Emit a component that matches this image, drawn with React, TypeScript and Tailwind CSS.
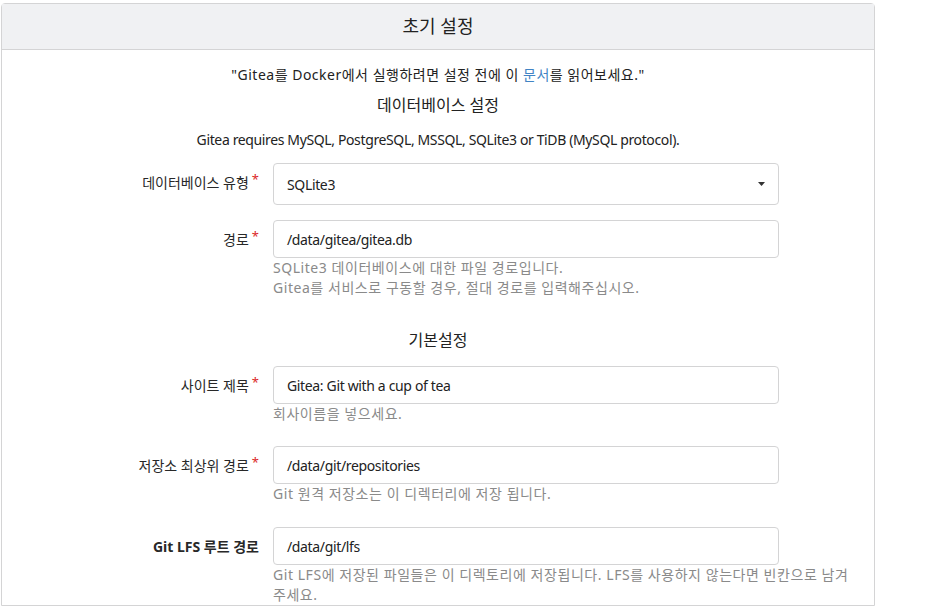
const font = { fontFamily: '"Noto Sans", "Noto Sans CJK KR", sans-serif' };

function Req() {
  return <span className="ml-[3px] relative top-[-4px] text-[#db2828] text-[13px]">*</span>;
}

function Row({
  label,
  required,
  bold,
  children,
  help,
}: {
  label: string;
  required?: boolean;
  bold?: boolean;
  children: React.ReactNode;
  help?: React.ReactNode;
}) {
  return (
    <div className="flex items-start">
      <div
        className={`w-[258px] shrink-0 text-right pt-[9px] pr-[1px] text-[14px] text-[#282828] ${bold ? "font-bold" : ""}`}
      >
        {label}
        {required && <Req />}
      </div>
      <div className="ml-[13px] flex-1 pr-[16px]">
        {children}
        {help && <div className="text-[14px] leading-[20px] tracking-[0.55px] text-[#8a8a8a]">{help}</div>}
      </div>
    </div>
  );
}

function TextInput({ value }: { value: string }) {
  return (
    <div className="w-[506px] h-[38px] border border-[#d4d4d5] rounded-[4px] flex items-center px-[13px] text-[14px] tracking-[-0.35px] text-[#222]">
      {value}
    </div>
  );
}

export default function App() {
  return (
    <div className="bg-white h-[606px] overflow-hidden" style={font}>
      <div className="mt-[3px] ml-px w-[874px] border border-[#d4d4d5] rounded-t-[4px]">
        <div className="h-[46px] bg-[#f0f1f3] border-b border-[#d4d4d5] flex items-center justify-center text-[18px] text-[#222]">
          초기 설정
        </div>
        <div className="pt-[14px]">
          <p className="text-center text-[14px] tracking-[0.5px] text-[#222] leading-[22px]">
            "Gitea를 Docker에서 실행하려면 설정 전에 이 <span className="text-[#4183c4]">문서</span>를 읽어보세요."
          </p>
          <h4 className="text-center text-[16px] text-[#222] mt-[7px] leading-[24px]">데이터베이스 설정</h4>
          <p className="text-center text-[14px] tracking-[-0.37px] text-[#222] mt-[12px] leading-[22px]">
            Gitea requires MySQL, PostgreSQL, MSSQL, SQLite3 or TiDB (MySQL protocol).
          </p>

          <div className="mt-[12px] flex flex-col">
            <Row label="데이터베이스 유형" required>
              <div className="w-[506px] h-[42px] border border-[#d4d4d5] rounded-[4px] flex items-center justify-between pl-[13px] pr-[13px] text-[14px] tracking-[-0.35px] text-[#222]">
                <span>SQLite3</span>
                <svg width="7" height="4" viewBox="0 0 7 4">
                  <path d="M0 0h7L3.5 4z" fill="#333" />
                </svg>
              </div>
            </Row>

            <div className="mt-[15px]">
              <Row
                label="경로"
                required
                help={
                  <>
                    SQLite3 데이터베이스에 대한 파일 경로입니다.
                    <br />
                    Gitea를 서비스로 구동할 경우, 절대 경로를 입력해주십시오.
                  </>
                }
              >
                <TextInput value="/data/gitea/gitea.db" />
              </Row>
            </div>

            <h4 className="text-center text-[16px] text-[#222] mt-[30px] leading-[24px]">기본설정</h4>

            <div className="mt-[14px]">
              <Row label="사이트 제목" required help="회사이름을 넣으세요.">
                <TextInput value="Gitea: Git with a cup of tea" />
              </Row>
            </div>

            <div className="mt-[22px]">
              <Row label="저장소 최상위 경로" required help="Git 원격 저장소는 이 디렉터리에 저장 됩니다.">
                <TextInput value="/data/git/repositories" />
              </Row>
            </div>

            <div className="mt-[23px]">
              <Row
                label="Git LFS 루트 경로"
                bold
                help="Git LFS에 저장된 파일들은 이 디렉토리에 저장됩니다. LFS를 사용하지 않는다면 빈칸으로 남겨주세요."
              >
                <TextInput value="/data/git/lfs" />
              </Row>
            </div>
          </div>
        </div>
      </div>
    </div>
  );
}
